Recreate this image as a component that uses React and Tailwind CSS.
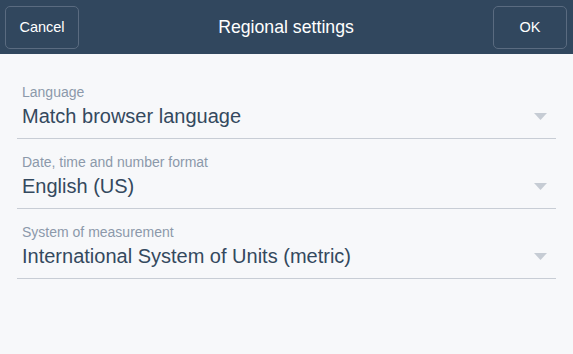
import React from 'react';

const fields = [
  { label: 'Language', value: 'Match browser language' },
  { label: 'Date, time and number format', value: 'English (US)' },
  { label: 'System of measurement', value: 'International System of Units (metric)' },
];

const Caret = () => (
  <svg width="13" height="7" viewBox="0 0 13 7" className="shrink-0">
    <path d="M0 0 H13 L6.5 7 Z" fill="#c6ccd4" />
  </svg>
);

const App = () => {
  return (
    <div className="w-[573px] h-[354px] bg-[#f7f8fa] font-['Liberation_Sans',Arial,sans-serif] overflow-hidden">
      <div className="h-[54px] bg-[#31475e] flex items-center pl-[5px] pr-[6px]">
        <button className="w-[74px] h-[43px] pt-[2px] rounded-[5px] border border-[#5a6b80] text-white text-[14.5px]">
          Cancel
        </button>
        <div className="flex-1 text-center text-white text-[17.7px]">Regional settings</div>
        <button className="w-[74px] h-[43px] pt-[2px] rounded-[5px] border border-[#5a6b80] text-white text-[14.5px]">
          OK
        </button>
      </div>

      <div className="pt-[30px] pl-[17px] pr-[17px]">
        {fields.map((f) => (
          <div key={f.label} className="mb-[15px] border-b border-[#c8cdd5] pb-[10px] pl-[5px] pr-[9px]">
            <div className="text-[14px] leading-[16px] text-[#8c99aa]">{f.label}</div>
            <div className="mt-[4px] flex items-center justify-between">
              <span className="text-[20px] leading-[24px] text-[#34495e]">{f.value}</span>
              <Caret />
            </div>
          </div>
        ))}
      </div>
    </div>
  );
};

export default App;
